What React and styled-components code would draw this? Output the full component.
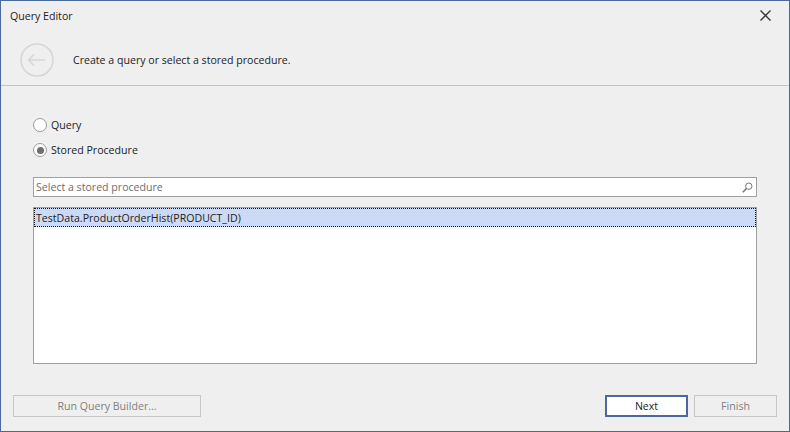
import styled, { createGlobalStyle } from "styled-components";

const GlobalStyle = createGlobalStyle`
  html, body {
    margin: 0;
    padding: 0;
    background: #efefef;
  }
`;

const Dialog = styled.div`
  box-sizing: border-box;
  width: 790px;
  height: 432px;
  display: flex;
  flex-direction: column;
  background: #efefef;
  border: 1px solid #4a6a9e;
  font-family: "Open Sans", sans-serif;
  font-size: 10.6px;
  color: #222;
  overflow: hidden;
`;

const TitleBar = styled.div`
  box-sizing: border-box;
  height: 29px;
  display: flex;
  align-items: center;
  justify-content: space-between;
  padding: 0 18px 0 9px;
`;

const CloseIcon = styled.svg`
  width: 11px;
  height: 11px;
  stroke: #333;
  stroke-width: 1.3;
  fill: none;
`;

const Header = styled.div`
  box-sizing: border-box;
  height: 56px;
  display: flex;
  align-items: center;
  gap: 19px;
  padding: 5px 0 0 19px;
  border-bottom: 1px solid #c4c4c4;
`;

const BackIcon = styled.svg`
  width: 34px;
  height: 34px;
  stroke: #d6d6d6;
  fill: none;
`;

const Body = styled.div`
  flex: 1;
  display: flex;
  flex-direction: column;
  padding: 29px 32px 0;
`;

const RadioRow = styled.label`
  height: 20px;
  display: flex;
  align-items: center;
  gap: 4px;
  margin-bottom: 5px;
`;

const RadioCircle = styled.span`
  box-sizing: border-box;
  width: 14px;
  height: 14px;
  border-radius: 50%;
  border: 1px solid #9a9a9a;
  background: #fff;
  display: flex;
  align-items: center;
  justify-content: center;
  &::after {
    content: "";
    width: 7px;
    height: 7px;
    border-radius: 50%;
    background: ${props => (props.checked ? "#6e6e6e" : "transparent")};
  }
`;

const RadioText = styled.span`
  padding-bottom: 1px;
`;

const SearchBox = styled.div`
  box-sizing: border-box;
  height: 20px;
  margin-top: 12px;
  display: flex;
  align-items: center;
  justify-content: space-between;
  padding: 0 3px 0 2px;
  background: #fff;
  border: 1px solid #a0a0a0;
  color: #6d6d6d;
`;

const SearchIcon = styled.svg`
  width: 11px;
  height: 11px;
  stroke: #777;
  stroke-width: 1;
  fill: none;
`;

const ListBox = styled.div`
  box-sizing: border-box;
  height: 157px;
  margin-top: 10px;
  background: #fff;
  border: 1px solid #a0a0a0;
`;

const ListItem = styled.div`
  box-sizing: border-box;
  height: 19px;
  display: flex;
  align-items: center;
  padding-left: 2px;
  background: #ccdaf5;
  outline: 1px dotted #111;
  outline-offset: -1px;
`;

const Footer = styled.div`
  display: flex;
  align-items: center;
  gap: 6px;
  padding: 0 12px 14px 12px;
`;

const Button = styled.button`
  box-sizing: border-box;
  width: ${props => props.width}px;
  height: 22px;
  padding: 0;
  font-family: inherit;
  font-size: inherit;
  background: ${props => (props.primary ? "#fff" : "transparent")};
  color: ${props => (props.primary ? "#222" : "#7f7f7f")};
  border: ${props => (props.primary ? "2px solid #4a6a9e" : "1px solid #c6c6c6")};
`;

const Spacer = styled.div`
  flex: 1;
`;

export default function App() {
  return (
    <>
      <GlobalStyle />
      <Dialog>
        <TitleBar>
          <span>Query Editor</span>
          <CloseIcon viewBox="0 0 11 11">
            <path d="M0.5 0.5 L10.5 10.5 M10.5 0.5 L0.5 10.5" />
          </CloseIcon>
        </TitleBar>
        <Header>
          <BackIcon viewBox="0 0 34 34">
            <circle cx="17" cy="17" r="16" strokeWidth="1.6" />
            <path d="M8.5 17 H25 M14 11.5 L8.5 17 L14 22.5" strokeWidth="1.4" />
          </BackIcon>
          <span>Create a query or select a stored procedure.</span>
        </Header>
        <Body>
          <RadioRow>
            <RadioCircle />
            <RadioText>Query</RadioText>
          </RadioRow>
          <RadioRow>
            <RadioCircle checked />
            <RadioText>Stored Procedure</RadioText>
          </RadioRow>
          <SearchBox>
            <span>Select a stored procedure</span>
            <SearchIcon viewBox="0 0 11 11">
              <circle cx="6.8" cy="4.2" r="3.2" />
              <path d="M4.5 6.5 L0.8 10.2" strokeWidth="1.6" />
            </SearchIcon>
          </SearchBox>
          <ListBox>
            <ListItem>TestData.ProductOrderHist(PRODUCT_ID)</ListItem>
          </ListBox>
        </Body>
        <Footer>
          <Button width={188} disabled>Run Query Builder...</Button>
          <Spacer />
          <Button width={83} primary>Next</Button>
          <Button width={83} disabled>Finish</Button>
        </Footer>
      </Dialog>
    </>
  );
}
